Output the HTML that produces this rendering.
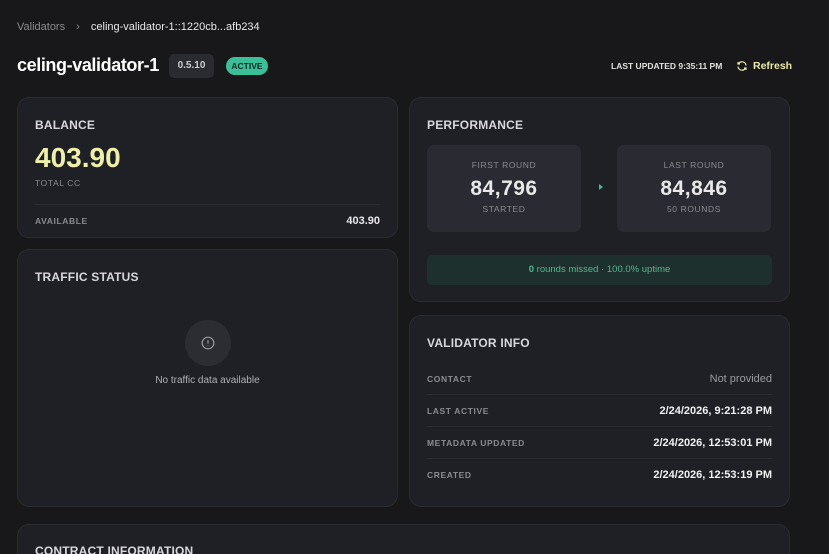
<!DOCTYPE html><html><head><style>
*{box-sizing:border-box;margin:0;padding:0}
html,body{width:829px;height:554px;overflow:hidden}
body{background:#18181a;font-family:"Liberation Sans",sans-serif;color:#e8e8ea;position:relative}
.abs{position:absolute}
.card{position:absolute;background:#1f2025;border:1px solid #2a2b30;border-radius:12px}
.h{position:absolute;font-size:12px;font-weight:bold;color:#d8d8dc;letter-spacing:.2px}
.lbl{font-size:8.5px;letter-spacing:.6px;color:#8a8b90;font-weight:bold}
.box{position:absolute;background:#2a2b32;border-radius:7px;text-align:center;width:154px;height:87px;top:47px}
.row{position:absolute;left:17px;right:17px;height:32px;display:flex;justify-content:space-between;align-items:center;border-bottom:1px solid #2b2c31}
.row span:last-child{font-size:11px;font-weight:bold;color:#f0f0f2}
</style></head><body>
<div class="abs" style="left:17px;top:21px;font-size:11px;color:#8a8b90">Validators <span style="margin:0 8px">›</span> <span style="color:#e8e8ea">celing-validator-1::1220cb...afb234</span></div>
<div class="abs" style="left:17px;top:55px;font-size:18px;font-weight:bold;color:#fff;letter-spacing:-0.4px">celing-validator-1</div>
<div class="abs" style="left:169px;top:54px;width:45px;height:24px;background:#2a2b30;border-radius:5px;font-size:10px;font-weight:bold;color:#ccc;text-align:center;line-height:24px">0.5.10</div>
<div class="abs" style="left:226px;top:57px;width:42px;height:18px;background:#3bbf98;border-radius:9px;font-size:8.5px;font-weight:bold;color:#0d2a22;text-align:center;line-height:18px">ACTIVE</div>
<div class="abs" style="left:611px;top:61px;font-size:8.5px;font-weight:bold;color:#e0e0e0">LAST UPDATED 9:35:11 PM</div>
<svg class="abs" style="left:736px;top:60px" width="12" height="12" viewBox="0 0 24 24" fill="none" stroke="#e8e6a0" stroke-width="2.5"><path d="M20 11a8 8 0 0 0-14.5-4M4 4v4h4M4 13a8 8 0 0 0 14.5 4M20 20v-4h-4"/></svg>
<div class="abs" style="left:753px;top:60px;font-size:10.5px;font-weight:bold;color:#ece9a8">Refresh</div>

<div class="card" style="left:17px;top:97px;width:381px;height:141px">
<div class="h" style="left:17px;top:20px">BALANCE</div>
<div class="abs" style="left:17px;top:44px;font-size:28px;font-weight:bold;color:#eef0a8">403.90</div>
<div class="abs lbl" style="left:17px;top:80px;font-weight:normal">TOTAL CC</div>
<div class="abs" style="left:17px;right:17px;top:106px;border-top:1px solid #2b2c31"></div>
<div class="abs lbl" style="left:17px;top:118px">AVAILABLE</div>
<div class="abs" style="right:17px;top:117px;font-size:11px;font-weight:bold">403.90</div>
</div>

<div class="card" style="left:17px;top:249px;width:381px;height:258px">
<div class="h" style="left:17px;top:20px">TRAFFIC STATUS</div>
<div class="abs" style="left:167px;top:70px;width:46px;height:46px;border-radius:50%;background:#2c2d33"></div>
<svg class="abs" style="left:183px;top:86px" width="14" height="14" viewBox="0 0 24 24" fill="none" stroke="#9a9ba0" stroke-width="2"><circle cx="12" cy="12" r="10"/><path d="M12 7v6M12 16v1"/></svg>
<div class="abs" style="left:0;right:0;top:125px;text-align:center;font-size:10px;color:#b0b1b6">No traffic data available</div>
</div>

<div class="card" style="left:409px;top:97px;width:381px;height:205px">
<div class="h" style="left:17px;top:20px">PERFORMANCE</div>
<div class="box" style="left:17px"><div class="lbl" style="margin-top:15px;font-weight:normal">FIRST ROUND</div><div style="font-size:21px;font-weight:bold;margin-top:7px;letter-spacing:.5px">84,796</div><div class="lbl" style="margin-top:3px;font-weight:normal">STARTED</div></div>
<div class="abs" style="left:189px;top:86px;width:0;height:0;border-left:4px solid #3bbf98;border-top:3px solid transparent;border-bottom:3px solid transparent"></div>
<div class="box" style="left:207px"><div class="lbl" style="margin-top:15px;font-weight:normal">LAST ROUND</div><div style="font-size:21px;font-weight:bold;margin-top:7px;letter-spacing:.5px">84,846</div><div class="lbl" style="margin-top:3px;font-weight:normal">50 ROUNDS</div></div>
<div class="abs" style="left:17px;top:157px;width:345px;height:30px;background:#1e302d;border-radius:5px;text-align:center;line-height:30px;font-size:9.5px;color:#52b894"><b>0</b> rounds missed · 100.0% uptime</div>
</div>

<div class="card" style="left:409px;top:315px;width:381px;height:192px">
<div class="h" style="left:17px;top:20px">VALIDATOR INFO</div>
<div class="row" style="top:47px"><span class="lbl">CONTACT</span><span style="color:#9a9ba0!important;font-weight:normal!important">Not provided</span></div>
<div class="row" style="top:79px"><span class="lbl">LAST ACTIVE</span><span>2/24/2026, 9:21:28 PM</span></div>
<div class="row" style="top:111px"><span class="lbl">METADATA UPDATED</span><span>2/24/2026, 12:53:01 PM</span></div>
<div class="row" style="top:143px;border:none"><span class="lbl">CREATED</span><span>2/24/2026, 12:53:19 PM</span></div>
</div>

<div class="card" style="left:17px;top:524px;width:773px;height:30px;border-bottom:none;border-radius:12px 12px 0 0;overflow:hidden">
<div class="h" style="left:17px;top:19px">CONTRACT INFORMATION</div>
</div>
</body></html>
